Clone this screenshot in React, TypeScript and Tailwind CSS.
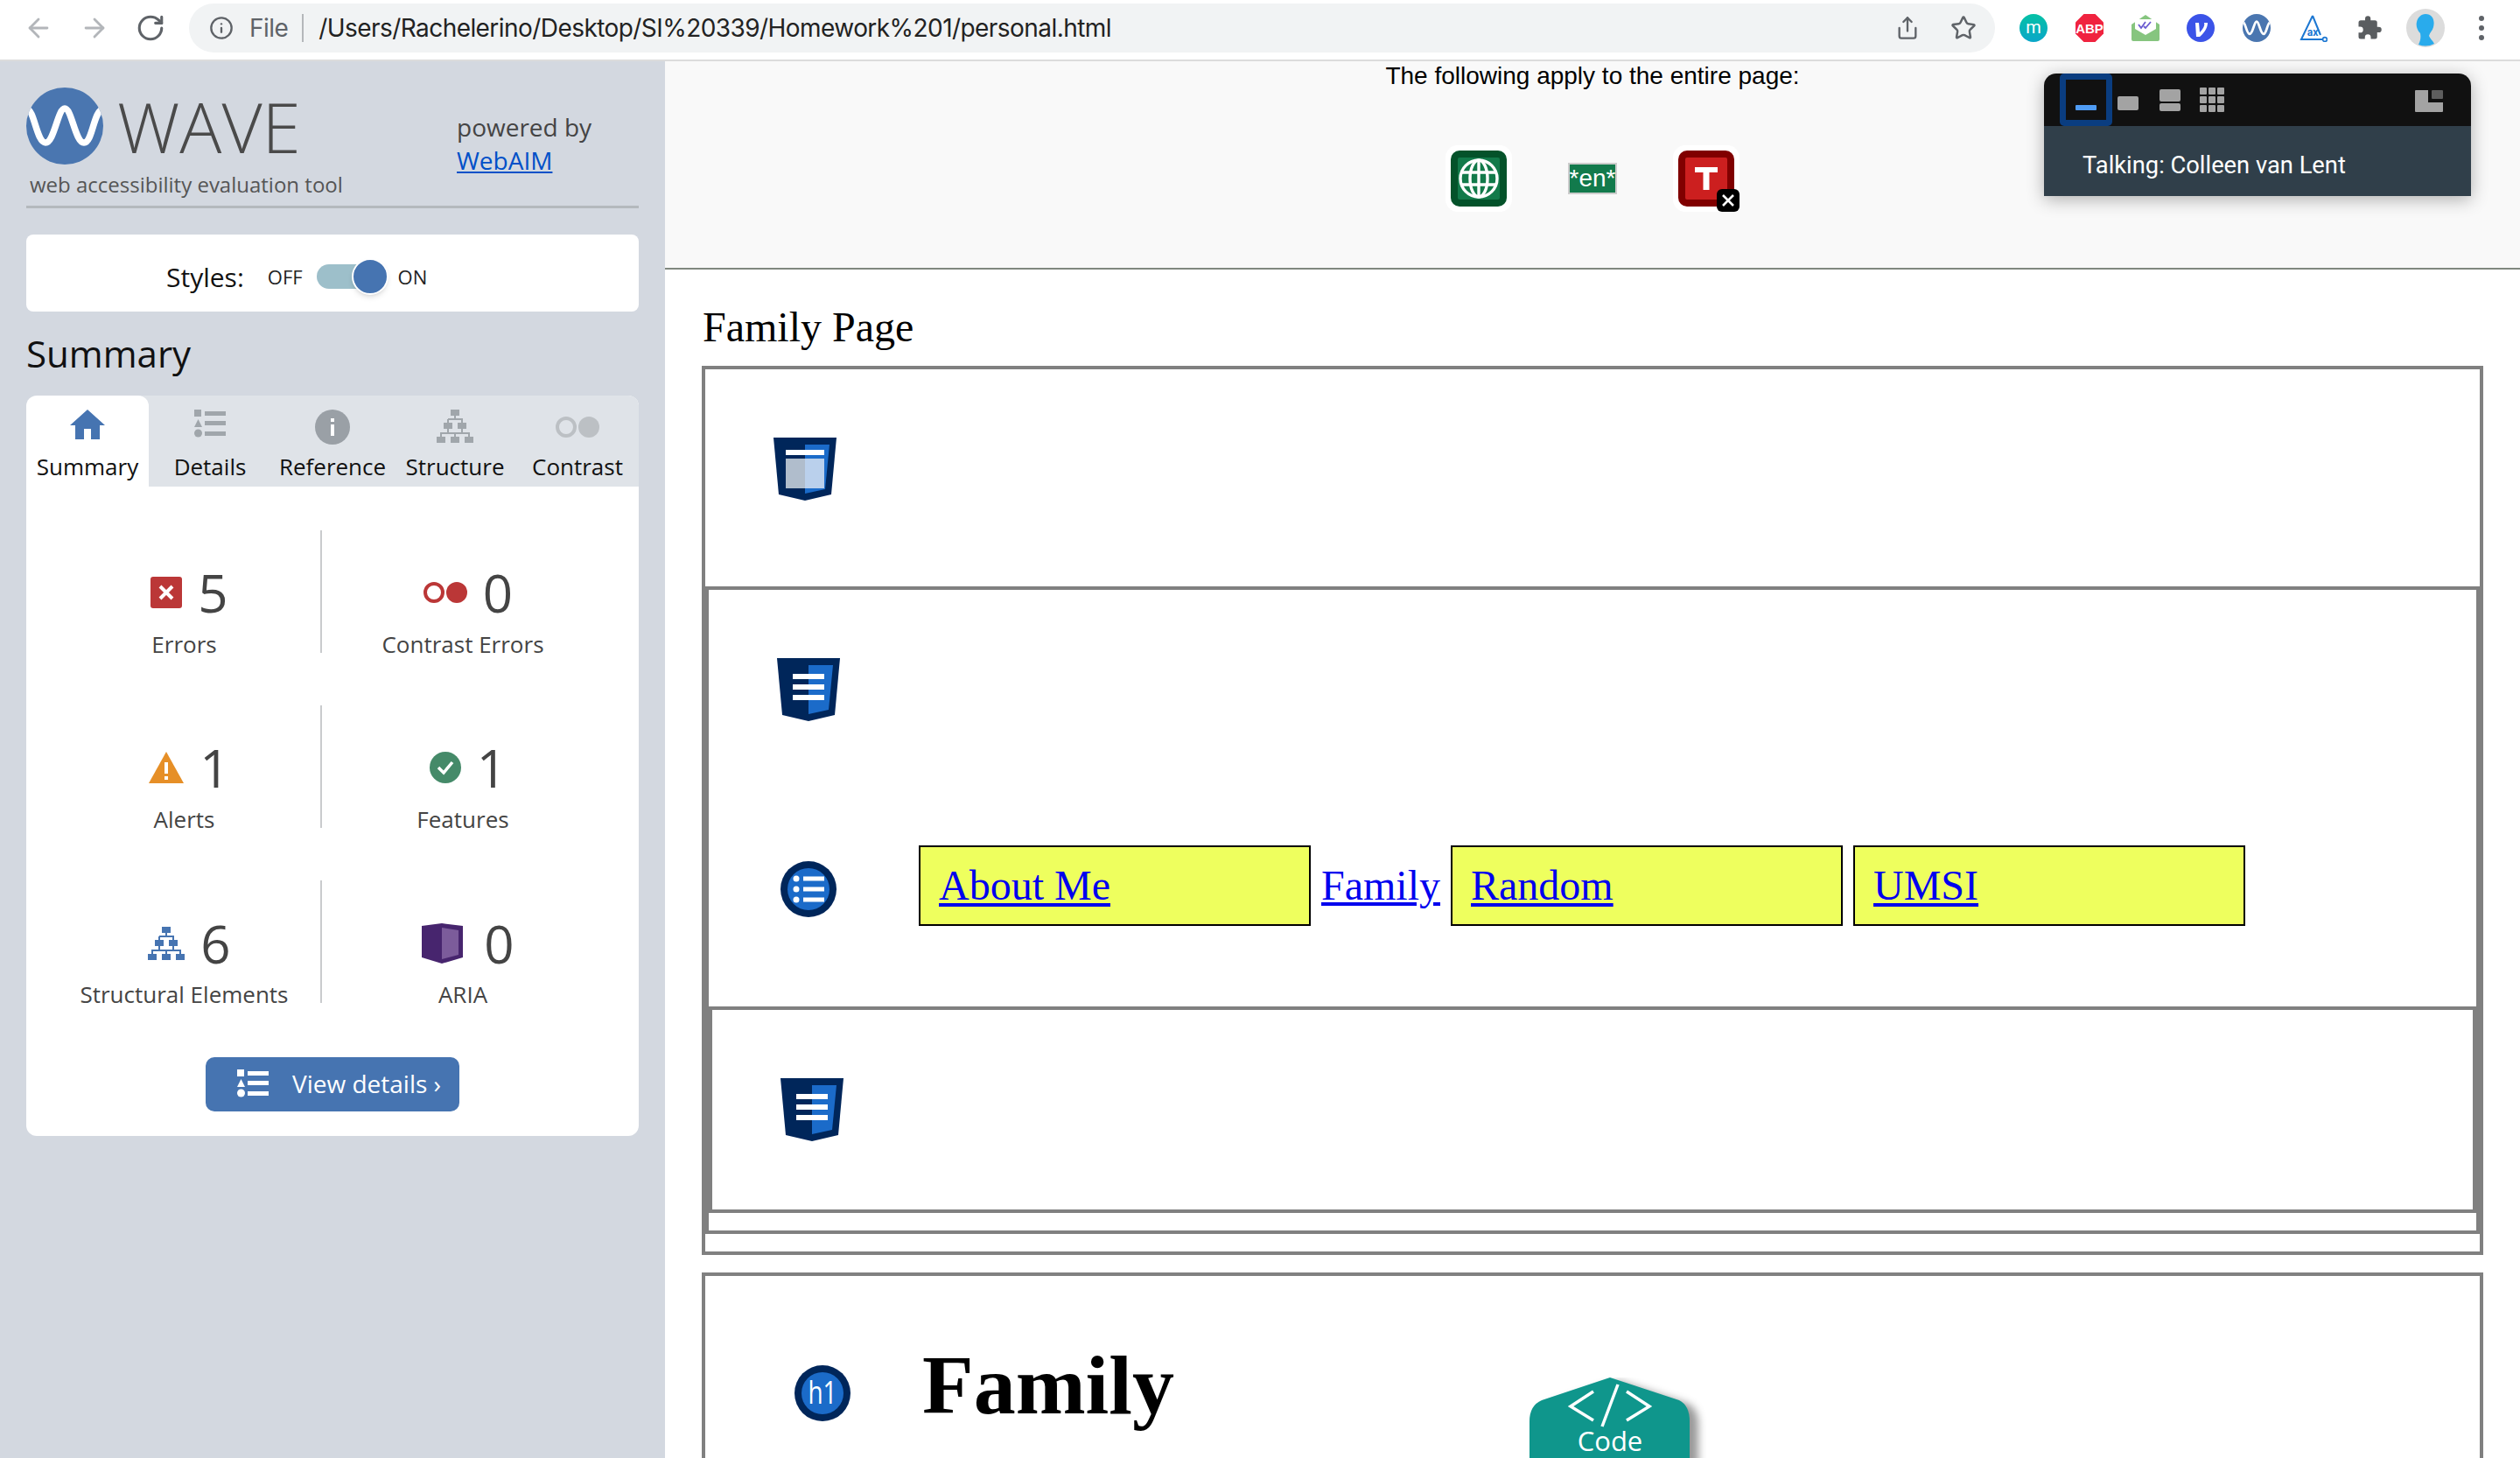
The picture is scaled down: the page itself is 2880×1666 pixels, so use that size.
import React from "react";
import { ArrowLeft, ArrowRight, RotateCw, Info, Share, Star } from "lucide-react";

const openSans = "font-['Open_Sans',sans-serif]";

function Shield({ kind }: { kind: "page" | "lines" }) {
  return (
    <svg width="72" height="72" viewBox="0 0 72 72" className="block shrink-0">
      <polygon points="0,0 72,0 66,65 36,72 6,65" fill="#00265a" />
      <polygon points="36,8 64,8 59,59 36,64" fill="#1b6bc9" />
      {kind === "lines" ? (
        <g fill="#fff">
          <rect x="18" y="18" width="36" height="6" />
          <rect x="18" y="30" width="36" height="6" />
          <rect x="18" y="42" width="36" height="6" />
        </g>
      ) : (
        <g>
          <rect x="14" y="14" width="44" height="6" fill="#fff" />
          <rect x="14" y="24" width="22" height="34" fill="#b0bdcc" />
          <rect x="36" y="24" width="22" height="34" fill="#bad0ec" />
        </g>
      )}
    </svg>
  );
}

function Badge({ children }: { children: React.ReactNode }) {
  return (
    <svg width="64" height="64" viewBox="0 0 64 64" className="block shrink-0">
      <circle cx="32" cy="32" r="32" fill="#00265a" />
      <circle cx="32" cy="32" r="24" fill="#1b6bc9" />
      {children}
    </svg>
  );
}

function ListGlyph({ color, w = 36, h = 32 }: { color: string; w?: number; h?: number }) {
  return (
    <svg width={w} height={h} viewBox="0 0 36 32" className="block shrink-0" fill={color}>
      <rect x="0" y="0" width="8" height="8" />
      <polygon points="4.5,11 9,20 0,20" />
      <circle cx="4.5" cy="27" r="4.5" />
      <rect x="12" y="2" width="24" height="5" />
      <rect x="12" y="13" width="24" height="5" />
      <rect x="12" y="25" width="24" height="5" />
    </svg>
  );
}

function Tree({ color }: { color: string }) {
  return (
    <svg width="42" height="38" viewBox="0 0 42 38" className="block shrink-0">
      <g stroke={color} strokeWidth="2" fill="none">
        <path d="M21 4V11M13 11H29V20M13 11V20M13 20V27H5V34M13 27H37V34M29 20V27M21 27V34" />
      </g>
      <g fill={color}>
        <rect x="16" y="0" width="10" height="7" />
        <rect x="8" y="15" width="10" height="7" />
        <rect x="24" y="15" width="10" height="7" />
        <rect x="0" y="31" width="10" height="7" />
        <rect x="16" y="31" width="10" height="7" />
        <rect x="32" y="31" width="10" height="7" />
      </g>
    </svg>
  );
}

function Contrast({ color }: { color: string }) {
  return (
    <svg width="50" height="24" viewBox="0 0 50 24" className="block shrink-0">
      <circle cx="12" cy="12" r="10" fill="none" stroke={color} strokeWidth="4" />
      <circle cx="38" cy="12" r="12" fill={color} />
    </svg>
  );
}

function WaveMark({ size }: { size: number }) {
  return (
    <svg width={size} height={size} viewBox="0 0 88 88" className="block shrink-0">
      <defs>
        <clipPath id={`c${size}`}>
          <circle cx="44" cy="44" r="44" />
        </clipPath>
      </defs>
      <circle cx="44" cy="44" r="44" fill="#4a76b0" />
      <path
        clipPath={`url(#c${size})`}
        d="M1 25C9 25 12 63 22 63S36 24 44 24 56 63 66 63 77 25 88 25"
        fill="none"
        stroke="#fff"
        strokeWidth="7.5"
      />
    </svg>
  );
}

function Toolbar() {
  return (
    <div className="flex h-[70px] items-start border-b-2 border-[#dcdcdc] bg-white">
      <div className="flex h-[64px] items-center pl-[27px]">
        <ArrowLeft size={34} strokeWidth={2} color="#b3b6ba" />
        <ArrowRight size={34} strokeWidth={2} color="#b3b6ba" className="ml-[30px]" />
        <RotateCw size={34} strokeWidth={2.2} color="#5f6368" className="ml-[30px]" />
      </div>
      <div className="ml-[27px] mt-[4px] flex h-[56px] w-[2064px] items-center rounded-full bg-[#f1f3f4] font-['Inter',sans-serif] text-[28px] tracking-[-0.56px] text-[#222]">
        <Info size={28} strokeWidth={2} color="#5f6368" className="ml-[23px]" />
        <span className="ml-[18px] text-[#5f6368]">File</span>
        <span className="ml-[16px] h-[32px] w-[2px] bg-[#b4b7ba]" />
        <span className="ml-[17px]">/Users/Rachelerino/Desktop/SI%20339/Homework%201/personal.html</span>
        <Share size={28} strokeWidth={2} color="#5f6368" className="ml-auto" />
        <Star size={30} strokeWidth={2} color="#5f6368" className="ml-[35px] mr-[21px]" />
      </div>
      <div className="ml-[28px] flex h-[64px] items-center">
        <svg width="32" height="32" viewBox="0 0 32 32" className="shrink-0">
          <defs>
            <linearGradient id="mg" x1="0" y1="0" x2="0" y2="1">
              <stop offset="0" stopColor="#05c1a5" />
              <stop offset="1" stopColor="#0aa6c9" />
            </linearGradient>
          </defs>
          <circle cx="16" cy="16" r="16" fill="url(#mg)" />
          <text x="16" y="22" textAnchor="middle" fontSize="20" fill="#fff" fontFamily="Roboto, sans-serif">m</text>
        </svg>
        <svg width="32" height="32" viewBox="0 0 32 32" className="ml-[32px] shrink-0">
          <polygon points="9.5,0 22.5,0 32,9.5 32,22.5 22.5,32 9.5,32 0,22.5 0,9.5" fill="#f0233f" />
          <text x="16" y="21.5" textAnchor="middle" fontSize="15" fontWeight="700" fill="#fff" fontFamily="Liberation Sans, sans-serif">ABP</text>
        </svg>
        <svg width="32" height="32" viewBox="0 0 32 32" className="ml-[32px] shrink-0">
          <path d="M0 12L16 1L32 12V29Q32 31 30 31H2Q0 31 0 29Z" fill="#86c57f" />
          <path d="M4 6H28V17L16 24L4 17Z" fill="#fff" />
          <path d="M8 12L11 16L16 9M14 14L16 16L22 9" fill="none" stroke="#6a5bd0" strokeWidth="1.8" />
        </svg>
        <svg width="32" height="32" viewBox="0 0 32 32" className="ml-[31px] shrink-0">
          <circle cx="16" cy="16" r="16" fill="#3b53e8" />
          <path d="M10 10H14L15 21C19 17 21 13 20 10H24C24 15 21 21 15 26H11Z" fill="#fff" />
        </svg>
        <div className="ml-[32px]">
          <WaveMark size={32} />
        </div>
        <svg width="32" height="32" viewBox="0 0 32 32" className="ml-[33px] shrink-0">
          <path d="M15 2L2 29H26" fill="none" stroke="#1c77d2" strokeWidth="2" />
          <path d="M15 2L24 24" fill="none" stroke="#1c77d2" strokeWidth="2" />
          <text x="15" y="25" textAnchor="middle" fontSize="12" fontWeight="700" fill="#1c77d2" fontFamily="Roboto, sans-serif">ax</text>
          <circle cx="29" cy="29" r="2.4" fill="none" stroke="#1c77d2" strokeWidth="1.6" />
        </svg>
        <svg width="30" height="30" viewBox="0 0 24 24" className="ml-[33px] shrink-0" fill="#5a5d60">
          <path d="M20.5 11H19V7a2 2 0 0 0-2-2h-4V3.5a2.5 2.5 0 0 0-5 0V5H4a2 2 0 0 0-2 2v3.8h1.5a2.7 2.7 0 0 1 0 5.4H2V20a2 2 0 0 0 2 2h3.8v-1.5a2.7 2.7 0 0 1 5.4 0V22H17a2 2 0 0 0 2-2v-4h1.5a2.5 2.5 0 0 0 0-5z" />
        </svg>
        <svg width="44" height="44" viewBox="0 0 44 44" className="ml-[27px] shrink-0">
          <circle cx="22" cy="22" r="22" fill="#dcdcdc" />
          <path d="M22 6C30 6 33 13 31 21C30 25 27 27 26 31C27 34 30 36 32 40A22 22 0 0 1 14 41C16 37 17 33 16 28C12 24 11 19 12 15C13 10 17 6 22 6Z" fill="#29abec" />
        </svg>
        <svg width="8" height="30" viewBox="0 0 8 30" className="ml-[38px] shrink-0" fill="#5f6368">
          <circle cx="4" cy="4" r="3" />
          <circle cx="4" cy="15" r="3" />
          <circle cx="4" cy="26" r="3" />
        </svg>
      </div>
    </div>
  );
}

function Tab({ icon, label, active, top = "pt-[16px]" }: { icon: React.ReactNode; label: string; active?: boolean; top?: string }) {
  return (
    <div className={`flex w-[140px] flex-col items-center ${active ? "rounded-t-[12px] bg-white" : ""}`}>
      <div className={`flex h-[62px] items-start justify-center ${top}`}>{icon}</div>
      <div className="mt-[4px] text-[26px] leading-[30px] text-[#111]">{label}</div>
    </div>
  );
}

function Stat({
  icon,
  value,
  label,
  gap = "gap-[18px]",
  divider,
  last,
}: {
  icon: React.ReactNode;
  value: string;
  label: string;
  gap?: string;
  divider?: boolean;
  last?: boolean;
}) {
  return (
    <div className={`flex h-[140px] flex-col items-center ${last ? "pt-[39px]" : "pt-[38px]"} ${divider ? "border-r-2 border-[#c9cbcd]" : ""}`}>
      <div className={`flex h-[66px] items-center pl-[12px] ${gap}`}>
        {icon}
        <span className="text-[60px] leading-[66px] text-[#444]">{value}</span>
      </div>
      <div className={`${last ? "mt-[7px]" : "mt-[8px]"} whitespace-nowrap text-[26px] leading-[36px] text-[#444]`}>{label}</div>
    </div>
  );
}

function Sidebar() {
  return (
    <aside className={`w-[760px] shrink-0 bg-[#d3d8e0] px-[30px] pt-[30px] ${openSans}`}>
      <div className="flex h-[138px] border-b-[3px] border-[#b4b9bd]">
        <div className="w-[492px]">
          <div className="flex h-[88px] items-center">
            <WaveMark size={88} />
            <span className="ml-[16px] text-[80px] font-light leading-[88px] text-[#4a4a4a]">WAVE</span>
          </div>
          <div className="ml-[4px] mt-[8px] text-[24px] leading-[30px] text-[#555]">web accessibility evaluation tool</div>
        </div>
        <div className="pt-[26px] text-[28px] leading-[38px] text-[#444]">
          <div>powered by</div>
          <a className="text-[#0050c8] underline">WebAIM</a>
        </div>
      </div>
      <div className="mt-[30px] flex h-[88px] items-center rounded-[8px] bg-white pl-[160px] pt-[8px]">
        <span className="text-[30px] text-[#111]">Styles:</span>
        <span className="ml-[27px] text-[22px] text-[#222]">OFF</span>
        <div className="relative ml-[16px] h-[28px] w-[60px] rounded-full bg-[#9dbfca]">
          <div className="absolute left-[40px] top-[-7px] h-[42px] w-[42px] rounded-full border-2 border-white bg-[#4674b1] shadow-md" />
        </div>
        <span className="ml-[33px] text-[22px] text-[#222]">ON</span>
      </div>
      <h2 className="mt-[20px] text-[42px] font-normal leading-[56px] text-[#111]">Summary</h2>
      <div className="mt-[20px] h-[846px] overflow-hidden rounded-[12px] bg-white">
        <div className="flex h-[104px] bg-[#dfe3e8]">
          <Tab
            active
            label="Summary"
            icon={
              <svg width="40" height="34" viewBox="0 0 40 34" fill="#4674b1">
                <polygon points="20,0 40,18 34,18 34,34 24,34 24,22 16,22 16,34 6,34 6,18 0,18" />
              </svg>
            }
          />
          <Tab label="Details" icon={<ListGlyph color="#a0a6ab" />} />
          <Tab
            label="Reference"
            icon={
              <svg width="40" height="40" viewBox="0 0 40 40">
                <circle cx="20" cy="20" r="20" fill="#9aa0a6" />
                <rect x="18" y="17" width="4" height="13" fill="#fff" />
                <rect x="18" y="10" width="4" height="4" fill="#fff" />
              </svg>
            }
          />
          <Tab label="Structure" icon={<Tree color="#a0a6ab" />} />
          <Tab label="Contrast" top="pt-[24px]" icon={<Contrast color="#bcc0c4" />} />
        </div>
        <div className="ml-[25px] mt-[50px] grid grid-cols-[313px_322px] gap-y-[60px]">
          <Stat
            divider
            value="5"
            label="Errors"
            icon={
              <svg width="36" height="36" viewBox="0 0 36 36">
                <rect width="36" height="36" rx="3" fill="#bb3737" />
                <path d="M11 11L25 25M25 11L11 25" stroke="#fff" strokeWidth="4" />
              </svg>
            }
          />
          <Stat value="0" label="Contrast Errors" icon={<Contrast color="#bb3737" />} />
          <Stat
            divider
            value="1"
            label="Alerts"
            icon={
              <svg width="40" height="36" viewBox="0 0 40 36">
                <polygon points="20,0 40,36 0,36" fill="#e68f27" />
                <rect x="18" y="12" width="4" height="13" fill="#fff" />
                <rect x="18" y="28" width="4" height="4" fill="#fff" />
              </svg>
            }
          />
          <Stat
            value="1"
            label="Features"
            icon={
              <svg width="36" height="36" viewBox="0 0 36 36">
                <circle cx="18" cy="18" r="18" fill="#458a69" />
                <path d="M10 18L16 24L26 12" fill="none" stroke="#fff" strokeWidth="3.5" />
              </svg>
            }
          />
          <Stat divider last value="6" label="Structural Elements" icon={<Tree color="#4674b1" />} />
          <Stat
            last
            value="0"
            label="ARIA"
            gap="gap-[24px]"
            icon={
              <svg width="47" height="46" viewBox="0 0 47 46">
                <polygon points="0,3 23,0 47,3 47,39 23,46 0,39" fill="#47256e" />
                <polygon points="23,5 42,8 42,36 23,41" fill="#7c5c9b" />
              </svg>
            }
          />
        </div>
        <div className="mt-[62px] flex justify-center">
          <div className="flex h-[62px] w-[290px] items-center rounded-[10px] bg-[#4674b1] pb-[2px] pl-[36px] text-[28px] text-white">
            <ListGlyph color="#fff" />
            <span className="ml-[27px]">View details ›</span>
          </div>
        </div>
      </div>
    </aside>
  );
}

function NavBox({ label }: { label: string }) {
  return (
    <div className="box-border h-[92px] w-[448px] border-2 border-black bg-[#eeff5e] pl-[21px] pt-[16px]">
      <a className="text-[48px] leading-[55px] text-[#0000ee] underline decoration-[4px] underline-offset-[4px]">{label}</a>
    </div>
  );
}

function TopPanel() {
  return (
    <div className="relative h-[238px] border-b-2 border-[#80887f] bg-[#f9f9f9] font-['Liberation_Sans',sans-serif]">
      <p className="text-center text-[28px] leading-[34px] text-black">The following apply to the entire page:</p>
      <div className="mt-[62px] flex items-center justify-center gap-[64px]">
        <div className="flex h-[76px] w-[76px] items-center justify-center rounded-[14px] bg-white">
          <div className="flex h-[64px] w-[64px] items-center justify-center rounded-[10px] bg-[#04522a]">
            <div className="flex h-[48px] w-[48px] items-center justify-center rounded-[2px] bg-[#127a4a]">
              <svg width="46" height="46" viewBox="0 0 46 46" fill="none" stroke="#fff" strokeWidth="3.4">
                <circle cx="23" cy="23" r="21" />
                <ellipse cx="23" cy="23" rx="10" ry="21" />
                <path d="M2 16H44M2 30H44M23 2V44" />
              </svg>
            </div>
          </div>
        </div>
        <div className="box-border flex h-[36px] w-[56px] items-center justify-center border-2 border-[#cccccc] bg-[#127a4c] text-[28px] leading-none text-white">*en*</div>
        <div className="relative flex h-[76px] w-[76px] items-center justify-center rounded-[14px] bg-white">
          <div className="flex h-[64px] w-[64px] items-center justify-center rounded-[10px] bg-[#800000]">
            <div className="flex h-[48px] w-[48px] items-center justify-center rounded-[2px] bg-[#cc1f1f]">
              <svg width="28" height="28" viewBox="0 0 28 28">
                <path d="M1 1H27V7H17.5V27H10.5V7H1Z" fill="#fff" />
              </svg>
            </div>
          </div>
          <div className="absolute bottom-0 right-0 flex h-[26px] w-[26px] items-center justify-center rounded-[6px] bg-black">
            <svg width="16" height="16" viewBox="0 0 16 16">
              <path d="M2 2L14 14M14 2L2 14" stroke="#fff" strokeWidth="2.6" />
            </svg>
          </div>
        </div>
      </div>
      <div className="absolute left-[1576px] top-[14px] w-[488px] overflow-hidden rounded-t-[14px] font-['Roboto',sans-serif] shadow-[0_4px_20px_rgba(0,0,0,0.3)]">
        <div className="flex h-[60px] bg-[#111] pl-[18px]">
          <div className="relative box-border flex h-[60px] w-[60px] items-end justify-center rounded-[5px] border-[7px] border-[#0a3d80] pb-[11px]">
            <div className="h-[6px] w-[24px] rounded-[1px] bg-[#4f9cf5]" />
          </div>
          <div className="ml-[6px] mt-[26px] h-[16px] w-[24px] rounded-[2px] bg-[#a3a3a3]" />
          <div className="ml-[24px] mt-[18px] flex flex-col gap-[2px]">
            <div className="h-[14px] w-[24px] rounded-[2px] bg-[#a3a3a3]" />
            <div className="h-[9px] w-[24px] rounded-[2px] bg-[#a3a3a3]" />
          </div>
          <div className="ml-[22px] mt-[16px] grid h-[28px] w-[28px] grid-cols-3 gap-[2px]">
            {Array.from({ length: 9 }).map((_, i) => (
              <div key={i} className="rounded-[1px] bg-[#a3a3a3]" />
            ))}
          </div>
          <svg width="32" height="26" viewBox="0 0 32 26" className="ml-[218px] mt-[18px]">
            <path d="M0 2Q0 1 1 1H15V15H32V25Q32 26 31 26H1Q0 26 0 25Z" fill="#a3a3a3" />
            <rect x="19" y="1" width="13" height="10" rx="1" fill="#5e5e5e" />
          </svg>
        </div>
        <div className="flex h-[80px] items-center bg-[#303f4a] pl-[44px] pt-[10px] text-[27.3px] text-white">Talking: Colleen van Lent</div>
      </div>
    </div>
  );
}

function Main() {
  return (
    <main className="flex-1 overflow-hidden bg-white font-['Liberation_Serif',serif] text-black">
      <TopPanel />
      <div className="ml-[43px] mt-[38px] text-[48px] leading-[56px]">Family Page</div>
      <div className="ml-[42px] mt-[16px] w-[2036px] border-4 border-[#808080]">
        <div className="ml-[78px] mb-[98px] mt-[78px]">
          <Shield kind="page" />
        </div>
        <div className="mb-[20px] border-4 border-[#808080]">
          <div className="ml-[78px] mt-[78px]">
            <Shield kind="lines" />
          </div>
          <div className="mb-[92px] ml-[82px] mt-[142px] flex items-baseline gap-[12px]">
            <div className="mr-[82px] self-start pt-[18px]">
              <Badge>
                <g fill="#fff">
                  <circle cx="18" cy="20" r="3.5" />
                  <circle cx="18" cy="32" r="3.5" />
                  <circle cx="18" cy="44" r="3.5" />
                  <rect x="26" y="17.5" width="24" height="5" />
                  <rect x="26" y="29.5" width="24" height="5" />
                  <rect x="26" y="41.5" width="24" height="5" />
                </g>
              </Badge>
            </div>
            <NavBox label="About Me" />
            <a className="text-[48px] leading-[55px] text-[#0000ee] underline decoration-[4px] underline-offset-[3px]">Family</a>
            <NavBox label="Random" />
            <NavBox label="UMSI" />
          </div>
          <div className="mb-[20px] h-[236px] border-4 border-[#808080] pl-[78px] pt-[78px]">
            <Shield kind="lines" />
          </div>
        </div>
      </div>
      <div className="relative ml-[42px] mt-[20px] h-[400px] w-[2036px] border-4 border-[#808080] pl-[102px] pt-[68px]">
        <div className="flex items-start">
          <div className="mt-[34px]">
            <Badge>
              <text x="32" y="0" textAnchor="middle" fontSize="28" fill="#fff" fontFamily="Open Sans, sans-serif" transform="translate(0 44) scale(1 1.3)">h1</text>
            </Badge>
          </div>
          <h1 className="ml-[82px] pt-[2px] text-[96px] font-bold leading-[110px]">Family</h1>
        </div>
        <svg width="210" height="92" viewBox="0 0 210 92" className="absolute left-[942px] top-[116px]">
          <path d="M14 26L92 0L171 26Q183 32 183 50V100H0V50Q0 32 14 26Z" fill="#0f968c" style={{ filter: "drop-shadow(10px 4px 5px rgba(0,0,0,0.4))" }} />
          <path d="M73 16L47 33L73 49M111 16L137 33L111 49" fill="none" stroke="#fff" strokeWidth="3.5" />
          <path d="M101 8L83 56" fill="none" stroke="#fff" strokeWidth="3.5" />
          <text x="92" y="84" textAnchor="middle" fontSize="31" fill="#fff" fontFamily="Open Sans, sans-serif">Code</text>
        </svg>
      </div>
    </main>
  );
}

export default function App() {
  return (
    <div className="flex h-[1666px] w-[2880px] flex-col overflow-hidden bg-white">
      <Toolbar />
      <div className="flex h-[1596px] overflow-hidden">
        <Sidebar />
        <Main />
      </div>
    </div>
  );
}
